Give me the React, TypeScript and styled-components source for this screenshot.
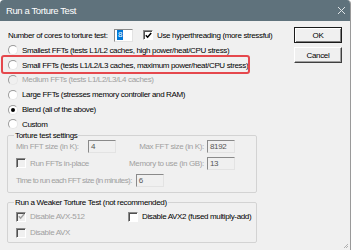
import React from 'react'
import styled, { createGlobalStyle, css } from 'styled-components'

const GlobalStyle = createGlobalStyle`
  html, body {
    margin: 0;
    padding: 0;
    background: #ffffff;
  }
  body {
    font-family: "Liberation Sans", Arial, sans-serif;
    font-size: 8px;
    letter-spacing: -0.35px;
    color: #000;
    white-space: nowrap;
  }
`

const colors = {
  face: '#f0f0f0',
  title: '#5f727c',
  disabled: '#a0a0a0',
  groupLine: '#d3d3d3',
  highlight: '#e5484d',
}

const Window = styled.div`
  width: 350px;
  height: 250px;
  overflow: hidden;
  background: ${colors.face};
  border-right: 1px solid #9a9a9a;
  border-radius: 4px 4px 0 0;
  position: relative;
`

const TitleBar = styled.div`
  height: 21px;
  background: ${colors.title};
  color: #fff;
  display: flex;
  align-items: center;
  justify-content: space-between;
  padding: 0 4px 0 6px;
  font-size: 9.5px;
  letter-spacing: -0.4px;
`

const Body = styled.div`
  display: flex;
  padding: 6px 8px 0 8px;
`

const Left = styled.div`
  width: 286px;
  display: flex;
  flex-direction: column;
`

const Right = styled.div`
  width: 48px;
  display: flex;
  flex-direction: column;
  gap: 4px;
`

const CoresRow = styled.div`
  height: 16px;
  display: flex;
  align-items: center;
`

const CoresLabel = styled.span`
  width: 106px;
`

const RadioRow = styled.div<{ $disabled?: boolean; $highlight?: boolean }>`
  height: 14.8px;
  display: flex;
  align-items: center;
  gap: 4px;
  position: relative;
  color: ${({ $disabled }) => ($disabled ? colors.disabled : '#000')};
  ${({ $highlight }) =>
    $highlight &&
    css`
      &::after {
        content: '';
        position: absolute;
        left: -7px;
        width: 245px;
        top: -3px;
        bottom: -1px;
        border: 2px solid ${colors.highlight};
        border-radius: 3px;
      }
    `}
`

const RadioDot = styled.span<{ $checked?: boolean; $disabled?: boolean }>`
  width: 8px;
  height: 8px;
  border-radius: 50%;
  border: 1px solid;
  border-color: #9a9a9a #e6e6e6 #e6e6e6 #9a9a9a;
  background: ${({ $disabled }) => ($disabled ? colors.face : '#fff')};
  display: flex;
  align-items: center;
  justify-content: center;
  flex-shrink: 0;
  &::after {
    content: '';
    width: 4px;
    height: 4px;
    border-radius: 50%;
    background: #000;
    display: ${({ $checked }) => ($checked ? 'block' : 'none')};
  }
`

const CheckBox = styled.span<{ $disabled?: boolean }>`
  width: 8px;
  height: 8px;
  border: 1px solid;
  border-color: #8a8a8a #fff #fff #8a8a8a;
  box-shadow: inset 1px 1px 0 #505050;
  background: ${({ $disabled }) => ($disabled ? colors.face : '#fff')};
  display: flex;
  align-items: center;
  justify-content: center;
  flex-shrink: 0;
`

const CheckItem = styled.label<{ $disabled?: boolean }>`
  display: flex;
  align-items: center;
  gap: 4px;
  color: ${({ $disabled }) => ($disabled ? colors.disabled : '#000')};
`

const TextBox = styled.span<{ $disabled?: boolean; $width?: number }>`
  width: ${({ $width }) => $width ?? 28}px;
  height: 13px;
  box-sizing: border-box;
  flex-shrink: 0;
  border: 1px solid;
  border-color: #8a8a8a #e3e3e3 #e3e3e3 #8a8a8a;
  background: ${({ $disabled }) => ($disabled ? colors.face : '#fff')};
  color: ${({ $disabled }) => ($disabled ? '#555' : '#000')};
  display: flex;
  align-items: center;
  padding-left: 2px;
`

const Selected = styled.span`
  background: #0078d7;
  color: #fff;
  padding: 0 1px;
  line-height: 10px;
`

const Group = styled.fieldset`
  margin: 0 0 0 -1px;
  width: 250px;
  box-sizing: border-box;
  border: 1px solid ${colors.groupLine};
  border-radius: 2px;
  padding: 0 0 3px 8px;
`

const Legend = styled.legend`
  padding: 0 1px;
  margin-left: -2px;
  line-height: 8px;
  height: 8px;
`

const SettingsGrid = styled.div`
  margin-top: -2px;
  display: grid;
  grid-template-columns: 72px 28px 91px 28px;
  grid-auto-rows: 17px;
  align-items: center;
`

const SettingLabel = styled.span<{ $right?: boolean }>`
  color: ${colors.disabled};
  text-align: ${({ $right }) => ($right ? 'right' : 'left')};
  padding-right: ${({ $right }) => ($right ? '3px' : '0')};
`

const SpanTwo = styled.div`
  grid-column: span 2;
`

const TimeRow = styled.div`
  grid-column: 1 / -1;
  display: flex;
  align-items: center;
`

const TimeLabel = styled.span`
  color: ${colors.disabled};
  letter-spacing: -0.6px;
  padding-right: 4px;
`

const WeakGroup = styled(Group)`
  margin-top: 6px;
  padding-bottom: 1px;
`

const WeakGrid = styled.div`
  margin-top: 2px;
  display: grid;
  grid-template-columns: 112px auto;
  grid-auto-rows: 16px;
  align-items: center;
`

const Button = styled.div<{ $default?: boolean }>`
  height: 16px;
  box-sizing: border-box;
  display: flex;
  align-items: center;
  justify-content: center;
  background: ${colors.face};
  ${({ $default }) =>
    $default
      ? css`
          border: 1px solid #1a1a1a;
          box-shadow: inset 1px 1px 0 #fff, inset -1px -1px 0 #808080;
        `
      : css`
          border: 1px solid;
          border-color: #fff #404040 #404040 #fff;
          box-shadow: inset -1px -1px 0 #a0a0a0;
        `}
`

const Grip = styled.svg`
  position: absolute;
  right: 1px;
  bottom: 1px;
`

const Tick: React.FC<{ color: string }> = ({ color }) => (
  <svg width="7" height="7" viewBox="0 0 7 7">
    <polyline points="0.8,3.2 2.6,5.2 6.2,1" fill="none" stroke={color} strokeWidth="1.5" />
  </svg>
)

const Radio: React.FC<{ label: string; checked?: boolean; disabled?: boolean; highlight?: boolean }> = ({
  label,
  checked,
  disabled,
  highlight,
}) => (
  <RadioRow $disabled={disabled} $highlight={highlight}>
    <RadioDot $checked={checked} $disabled={disabled} />
    <span>{label}</span>
  </RadioRow>
)

const Check: React.FC<{ label: string; checked?: boolean; disabled?: boolean }> = ({ label, checked, disabled }) => (
  <CheckItem $disabled={disabled}>
    <CheckBox $disabled={disabled}>{checked && <Tick color={disabled ? '#a0a0a0' : '#000'} />}</CheckBox>
    <span>{label}</span>
  </CheckItem>
)

const App: React.FC = () => (
  <>
    <GlobalStyle />
    <Window>
      <TitleBar>
        <span>Run a Torture Test</span>
        <svg width="9" height="9" viewBox="0 0 9 9">
          <path d="M1 1 L8 8 M8 1 L1 8" stroke="#dfe5e8" strokeWidth="1" />
        </svg>
      </TitleBar>
      <Body>
        <Left>
          <CoresRow>
            <CoresLabel>Number of cores to torture test:</CoresLabel>
            <TextBox $width={19}>
              <Selected>8</Selected>
            </TextBox>
            <span style={{ width: 10 }} />
            <Check label="Use hyperthreading (more stressful)" checked />
          </CoresRow>
          <Radio label="Smallest FFTs (tests L1/L2 caches, high power/heat/CPU stress)" />
          <Radio label="Small FFTs (tests L1/L2/L3 caches, maximum power/heat/CPU stress)" highlight />
          <Radio label="Medium FFTs (tests L1/L2/L3/L4 caches)" disabled />
          <Radio label="Large FFTs (stresses memory controller and RAM)" />
          <Radio label="Blend (all of the above)" checked />
          <Radio label="Custom" />
          <Group>
            <Legend>Torture test settings</Legend>
            <SettingsGrid>
              <SettingLabel>Min FFT size (in K):</SettingLabel>
              <TextBox $disabled>4</TextBox>
              <SettingLabel $right>Max FFT size (in K):</SettingLabel>
              <TextBox $disabled>8192</TextBox>
              <SpanTwo>
                <Check label="Run FFTs in-place" disabled />
              </SpanTwo>
              <SettingLabel $right>Memory to use (in GB):</SettingLabel>
              <TextBox $disabled>13</TextBox>
              <TimeRow>
                <TimeLabel>Time to run each FFT size (in minutes):</TimeLabel>
                <TextBox $disabled>6</TextBox>
              </TimeRow>
            </SettingsGrid>
          </Group>
          <WeakGroup>
            <Legend>Run a Weaker Torture Test (not recommended)</Legend>
            <WeakGrid>
              <Check label="Disable AVX-512" checked disabled />
              <Check label="Disable AVX2 (fused multiply-add)" />
              <Check label="Disable AVX" disabled />
            </WeakGrid>
          </WeakGroup>
        </Left>
        <Right>
          <Button $default>OK</Button>
          <Button>Cancel</Button>
        </Right>
      </Body>
      <Grip width="6" height="6" viewBox="0 0 6 6">
        <path d="M5 1 L1 5 M5 3 L3 5" stroke="#b0b0b0" strokeWidth="1" />
      </Grip>
    </Window>
  </>
)

export default App
